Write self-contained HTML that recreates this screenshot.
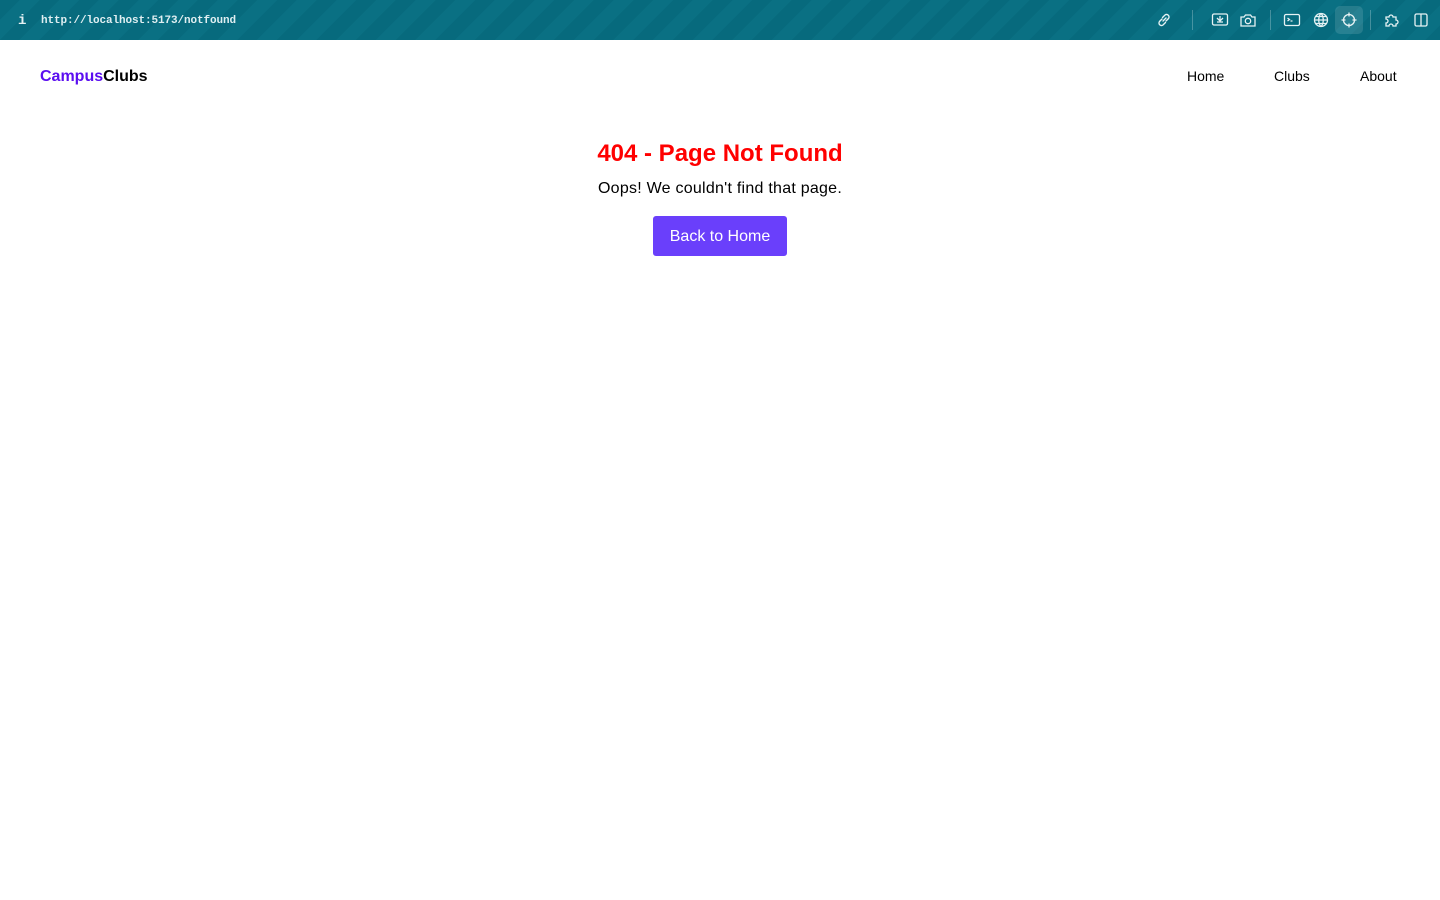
<!DOCTYPE html>
<html><head><meta charset="utf-8"><style>
*{margin:0;padding:0;box-sizing:border-box}
body{width:1440px;height:900px;background:#fff;font-family:"Liberation Sans",sans-serif;overflow:hidden;position:relative}
.bar{position:absolute;top:0;left:0;width:1440px;height:40px;background:repeating-linear-gradient(135deg,#076a7d 0 14px,#0a7083 14px 28px);color:#e6f2f4}
.bar .i{position:absolute;left:18px;top:13px;font:bold 14px "Liberation Mono",monospace}
.bar .url{position:absolute;left:41px;top:15px;font:bold 11px "Liberation Mono",monospace;color:#dfeef1;letter-spacing:-0.1px}
.bar svg{position:absolute;top:11px}
.sep{position:absolute;top:10px;width:1px;height:20px;background:rgba(255,255,255,.25)}
.logo{position:absolute;left:40px;top:68px;font-weight:bold;font-size:16px;color:#000}
.logo span{color:#5b0ef0}
.nav a{position:absolute;top:68px;font-size:14px;color:#000;text-decoration:none}
h1{position:absolute;left:0;width:1440px;top:140px;text-align:center;color:#ff0000;font-size:24px;font-weight:bold}
p{position:absolute;left:0;width:1440px;top:180px;text-align:center;font-size:16px;color:#000;letter-spacing:0.25px}
.btn{position:absolute;left:653px;top:216px;width:134px;height:40px;background:#6a3ffb;border-radius:3px;color:#fff;font-size:16px;text-align:center;line-height:42px}
</style></head><body>
<div class="bar">
<div class="i">i</div><div class="url">http://localhost:5173/notfound</div>
<svg style="left:1155px" width="18" height="18" viewBox="0 0 18 18" fill="none" stroke="#e6f2f4" stroke-width="1.4" stroke-linecap="round"><path d="M8 10l3-3M7 8L4.5 10.5a2.5 2.5 0 003.5 3.5L10.5 11.5M11 10l2.5-2.5A2.5 2.5 0 0010 4L7.5 6.5"/></svg>
<div class="sep" style="left:1192px"></div>
<svg style="left:1211px" width="18" height="18" viewBox="0 0 18 18" fill="none" stroke="#e6f2f4" stroke-width="1.3"><rect x="1.5" y="3" width="15" height="11" rx="1.5"/><path d="M6 7l3 3 3-3M9 5v5M6 11h6"/></svg>
<svg style="left:1239px" width="18" height="18" viewBox="0 0 18 18" fill="none" stroke="#e6f2f4" stroke-width="1.3"><path d="M2 6h3l1.5-2h5L13 6h3v9H2z"/><circle cx="9" cy="10" r="2.7"/></svg>
<div class="sep" style="left:1270px"></div>
<svg style="left:1283px" width="18" height="18" viewBox="0 0 18 18" fill="none" stroke="#e6f2f4" stroke-width="1.3"><rect x="1.5" y="3.5" width="15" height="11" rx="1.5"/><path d="M4.5 7l2 1.5-2 1.5M7.5 10h2"/></svg>
<svg style="left:1312px" width="18" height="18" viewBox="0 0 18 18" fill="none" stroke="#e6f2f4" stroke-width="1.3"><circle cx="9" cy="9" r="6.5"/><path d="M2.5 9h13M9 2.5c-3 3-3 10 0 13M9 2.5c3 3 3 10 0 13M4 5.5h10M4 12.5h10"/></svg>
<div style="position:absolute;left:1335px;top:6px;width:28px;height:28px;border-radius:5px;background:rgba(255,255,255,.12)"></div>
<svg style="left:1340px" width="18" height="18" viewBox="0 0 18 18" fill="none" stroke="#e6f2f4" stroke-width="1.3"><circle cx="9" cy="9" r="5.5"/><path d="M9 1.5v4M9 12.5v4M1.5 9h4M12.5 9h4"/></svg>
<div class="sep" style="left:1370px"></div>
<svg style="left:1383px" width="20" height="18" viewBox="0 0 20 18" fill="none" stroke="#e6f2f4" stroke-width="1.3"><path d="M3 6h3a2 2 0 014 0h3v3a2 2 0 010 4v2H10a2 2 0 00-4 0H3v-3a2 2 0 000-4z"/></svg>
<svg style="left:1412px" width="18" height="18" viewBox="0 0 18 18" fill="none" stroke="#e6f2f4" stroke-width="1.3"><rect x="3" y="3" width="12" height="12" rx="1.5"/><path d="M9 3v12"/></svg>
</div>
<div class="logo"><span>Campus</span>Clubs</div>
<div class="nav"><a style="left:1187px">Home</a><a style="left:1274px">Clubs</a><a style="left:1360px">About</a></div>
<h1>404 - Page Not Found</h1>
<p>Oops! We couldn't find that page.</p>
<div class="btn">Back to Home</div>
</body></html>
